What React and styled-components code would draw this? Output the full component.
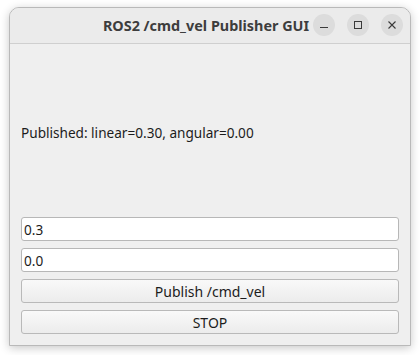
import React from 'react';
import styled, { createGlobalStyle } from 'styled-components';

const GlobalStyle = createGlobalStyle`
  html, body {
    margin: 0;
    padding: 0;
    background: #ffffff;
  }
  body {
    font-family: 'Noto Sans', 'DejaVu Sans', sans-serif;
  }
`;

const Page = styled.div`
  width: 420px;
  height: 355px;
  padding: 7px 9px 0 9px;
  box-sizing: border-box;
`;

const Window = styled.div`
  width: 402px;
  height: 339px;
  box-sizing: border-box;
  border: 1px solid #b9b9b9;
  border-radius: 10px 10px 0 0;
  background: #efefef;
  box-shadow: 0 2px 10px rgba(0, 0, 0, 0.22);
  display: flex;
  flex-direction: column;
  overflow: hidden;
`;

const TitleBar = styled.div`
  height: 35px;
  flex: 0 0 auto;
  background: #ebebeb;
  border-bottom: 1px solid #cfcfcf;
  display: flex;
  align-items: center;
  position: relative;
`;

const Title = styled.div`
  flex: 1;
  text-align: center;
  padding-right: 8px;
  font-weight: bold;
  font-size: 14.4px;
  color: #3d3d3d;
`;

const Controls = styled.div`
  position: absolute;
  right: 7px;
  top: 6px;
  display: flex;
  gap: 12px;
`;

const ControlButton = styled.div`
  width: 22px;
  height: 22px;
  border-radius: 50%;
  background: #dcdcdc;
  display: flex;
  align-items: center;
  justify-content: center;
  color: #3a3a3a;
`;

const Content = styled.div`
  flex: 1;
  padding: 11px;
  display: flex;
  flex-direction: column;
  gap: 7px;
`;

const Status = styled.div`
  flex: 1;
  display: flex;
  align-items: center;
  font-size: 13.6px;
  color: #1c1c1c;
`;

const Field = styled.div`
  height: 24px;
  box-sizing: border-box;
  border: 1px solid #b7b7b7;
  border-radius: 3px;
  background: #ffffff;
  display: flex;
  align-items: center;
  padding-left: 2px;
  font-size: 13.6px;
  color: #1c1c1c;
`;

const Button = styled.div`
  height: 24px;
  box-sizing: border-box;
  border: 1px solid #b9b9b9;
  border-radius: 3px;
  background: linear-gradient(#f9f9f9, #ececec);
  display: flex;
  align-items: center;
  justify-content: center;
  font-size: 14px;
  color: #1c1c1c;
`;

const MinIcon = () => (
  <svg width='10' height='10' viewBox='0 0 10 10'>
    <line x1='1' y1='7.5' x2='9' y2='7.5' stroke='currentColor' strokeWidth='1' />
  </svg>
);

const MaxIcon = () => (
  <svg width='10' height='10' viewBox='0 0 10 10'>
    <rect x='1.5' y='1.5' width='7' height='7' fill='none' stroke='currentColor' strokeWidth='1' />
  </svg>
);

const CloseIcon = () => (
  <svg width='10' height='10' viewBox='0 0 10 10'>
    <path d='M1.5 1.5 L8.5 8.5 M8.5 1.5 L1.5 8.5' stroke='currentColor' strokeWidth='1.1' />
  </svg>
);

const App = () => {
  const linear = 0.3;
  const angular = 0.0;
  return (
    <Page>
      <GlobalStyle />
      <Window>
        <TitleBar>
          <Title>ROS2 /cmd_vel Publisher GUI</Title>
          <Controls>
            <ControlButton>
              <MinIcon />
            </ControlButton>
            <ControlButton>
              <MaxIcon />
            </ControlButton>
            <ControlButton>
              <CloseIcon />
            </ControlButton>
          </Controls>
        </TitleBar>
        <Content>
          <Status>
            Published: linear={linear.toFixed(2)}, angular={angular.toFixed(2)}
          </Status>
          <Field>0.3</Field>
          <Field>0.0</Field>
          <Button>Publish /cmd_vel</Button>
          <Button>STOP</Button>
        </Content>
      </Window>
    </Page>
  );
};

export default App;
